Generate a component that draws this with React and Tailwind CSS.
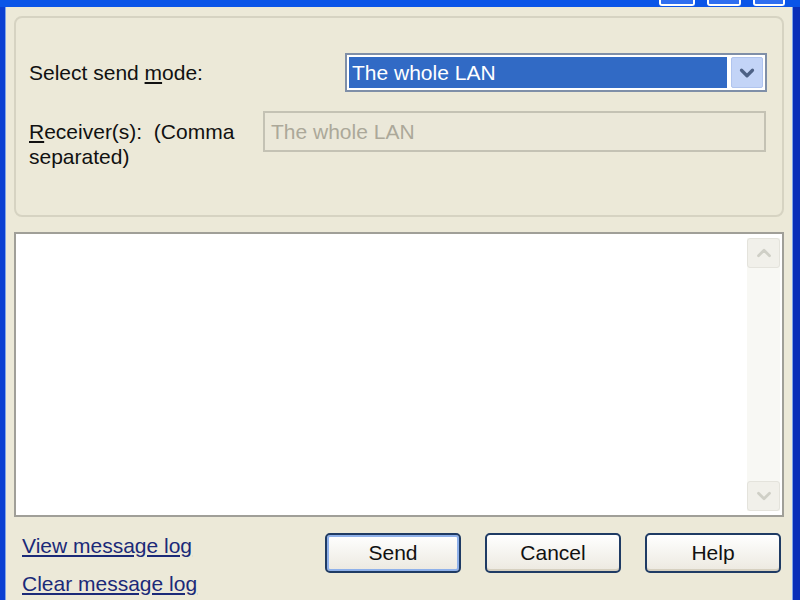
import { ChevronDown, ChevronUp } from 'lucide-react'

const font = { fontFamily: '"Liberation Sans", Arial, sans-serif' }

function TitleButton({ w }) {
  return (
    <div className={`${w} h-[6px] rounded-b-[3px] border-x-2 border-b-2 border-white bg-[#2f6ef0]`} />
  )
}

function XpButton({ children, focused }) {
  return (
    <button
      className={`w-[136px] h-[40px] rounded-[5px] border-2 border-[#1f3b64] text-[21px] text-[#111] bg-gradient-to-b from-white to-[#ece9e0] ${
        focused ? 'shadow-[inset_0_0_0_2px_#8fb1ea]' : 'shadow-[inset_0_-2px_0_#d6d0c0]'
      }`}
    >
      {children}
    </button>
  )
}

export default function App() {
  return (
    <div className="w-[800px] h-[600px] flex flex-col bg-[#0b4ee0] overflow-hidden" style={font}>
      <div className="h-[7px] flex justify-end items-start pr-[15px] gap-[12px] bg-[#0a55e8]">
        <TitleButton w="w-[36px]" />
        <TitleButton w="w-[34px]" />
        <TitleButton w="w-[32px]" />
      </div>

      <div className="flex-1 flex">
        <div className="w-[6px] bg-[#0a3fd2] border-r border-[#7fa5e8]" />

        <div className="flex-1 bg-[#ece9d8] px-[8px] pt-[9px] flex flex-col">
          {/* group box */}
          <div className="h-[201px] rounded-[8px] border-2 border-[#d6d3c2] pl-[13px] pr-[15px] pt-[35px]">
            <div className="flex items-center h-[39px]">
              <div className="flex-1 text-[21px] text-[#111]">
                Select send <span className="underline">m</span>ode:
              </div>
              <div className="w-[422px] h-[39px] border-2 border-[#7f8fa8] bg-white p-[2px] flex gap-[4px]">
                <div className="flex-1 bg-[#316ac5] text-white text-[21px] leading-[31px] pl-[3px]">
                  The whole LAN
                </div>
                <div className="w-[32px] rounded-[2px] bg-[#c3d4f7] border border-[#b0c4ee] flex items-center justify-center">
                  <ChevronDown size={22} strokeWidth={3.5} className="text-[#4d6185]" />
                </div>
              </div>
            </div>

            <div className="flex mt-[19px]">
              <div className="w-[234px] text-[21px] leading-[25px] text-[#111] pt-[8px]">
                <span className="underline">R</span>eceiver(s):&nbsp; (Comma
                <br />
                separated)
              </div>
              <div className="w-[503px] h-[41px] border-2 border-[#c4c2b4] bg-[#ebe8d9] text-[21px] leading-[37px] pl-[6px] text-[#aca899]">
                The whole LAN
              </div>
            </div>
          </div>

          {/* message area */}
          <div className="mt-[15px] h-[285px] border-2 border-[#a09f98] bg-white flex justify-end pr-[2px] py-[4px]">
            <div className="w-[33px] bg-[#f8f8f4] flex flex-col justify-between">
              <div className="h-[30px] rounded-[3px] border border-[#e4e3dc] bg-[#f1f0ea] flex items-center justify-center">
                <ChevronUp size={22} strokeWidth={3} className="text-[#cfcfc6]" />
              </div>
              <div className="h-[30px] rounded-[3px] border border-[#e4e3dc] bg-[#f1f0ea] flex items-center justify-center">
                <ChevronDown size={22} strokeWidth={3} className="text-[#cfcfc6]" />
              </div>
            </div>
          </div>

          {/* bottom row */}
          <div className="flex mt-[16px]">
            <div className="flex flex-col pl-[8px] gap-[13px] text-[21px] text-[#1b2a78] leading-[25px]">
              <span className="underline">View message log</span>
              <span className="underline">Clear message log</span>
            </div>
            <div className="flex-1 flex justify-end gap-[24px] pr-[3px]">
              <XpButton focused>Send</XpButton>
              <XpButton>Cancel</XpButton>
              <XpButton>Help</XpButton>
            </div>
          </div>
        </div>

        <div className="w-[8px] bg-[#0a2fb8] border-l border-[#7fa5e8]" />
      </div>
    </div>
  )
}
